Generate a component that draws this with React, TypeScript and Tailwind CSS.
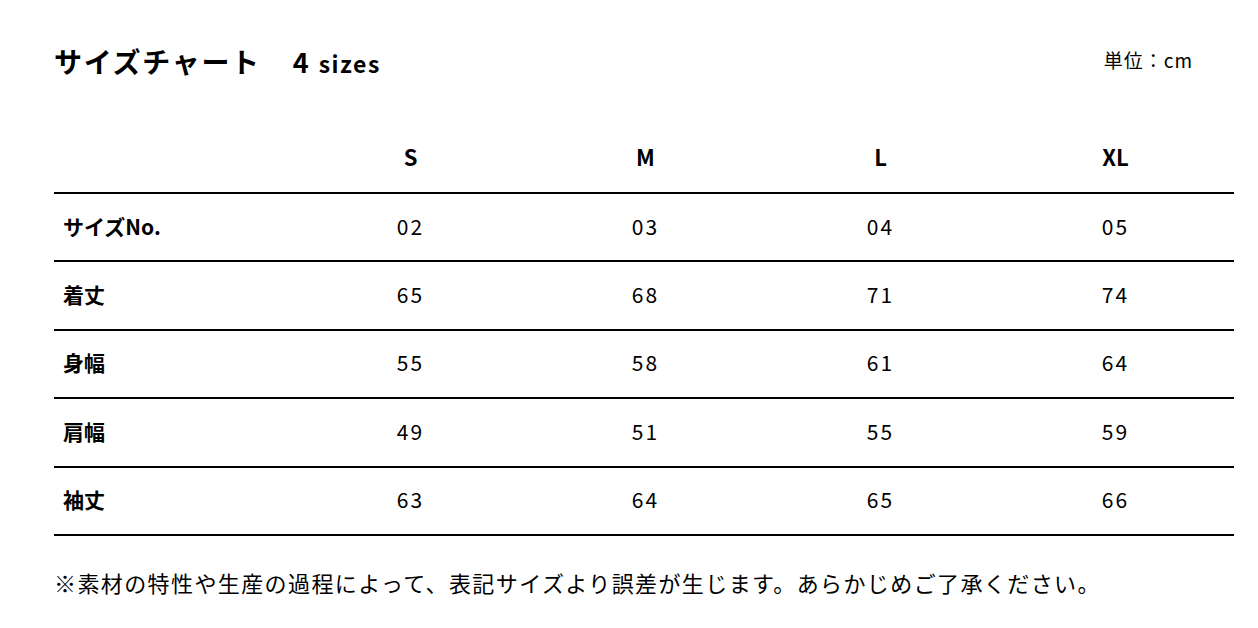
const sizes = ['S', 'M', 'L', 'XL'];

const rows = [
  { label: 'サイズNo.', values: ['02', '03', '04', '05'] },
  { label: '着丈', values: ['65', '68', '71', '74'] },
  { label: '身幅', values: ['55', '58', '61', '64'] },
  { label: '肩幅', values: ['49', '51', '55', '59'] },
  { label: '袖丈', values: ['63', '64', '65', '66'] },
];

const font = { fontFamily: '"Noto Sans CJK JP", "Noto Sans", sans-serif' };

export default function App() {
  return (
    <div className="w-[1258px] h-[628px] bg-white text-black pl-[54px] pr-[24px]" style={font}>
      {/* Title */}
      <div className="flex items-center justify-between h-[124px] pb-[2px]">
        <div className="flex items-baseline">
          <h1 className="text-[28px] font-bold tracking-[1.7px] leading-none">サイズチャート</h1>
          <span className="ml-[32px] text-[27px] font-bold leading-none">4</span>
          <span className="ml-[10px] text-[23px] font-bold leading-none tracking-[1.5px]">sizes</span>
        </div>
        <div className="mr-[41px] mb-[4px] text-[19px] tracking-[1px] leading-none">単位：cm</div>
      </div>

      {/* Table */}
      <div className="grid grid-cols-[239px_repeat(4,235px)] items-center h-[68px] pb-[4px]">
        <div />
        {sizes.map((s) => (
          <div key={s} className="text-center text-[22px] font-bold leading-none">
            {s}
          </div>
        ))}
      </div>
      <div className="border-b-2 border-black">
        {rows.map((row) => (
          <div
            key={row.label}
            className="grid grid-cols-[239px_repeat(4,235px)] items-center h-[68.4px] border-t-2 border-black"
          >
            <div className="pl-[9px] pb-[2px] text-[21px] font-bold leading-none">{row.label}</div>
            {row.values.map((v, i) => (
              <div key={i} className="text-center pb-[2px] text-[21px] tracking-[2px] leading-none">
                {v}
              </div>
            ))}
          </div>
        ))}
      </div>

      {/* Note */}
      <p className="mt-[35px] text-[22px] tracking-[1.4px] leading-none">
        ※素材の特性や生産の過程によって、表記サイズより誤差が生じます。あらかじめご了承ください。
      </p>
    </div>
  );
}
